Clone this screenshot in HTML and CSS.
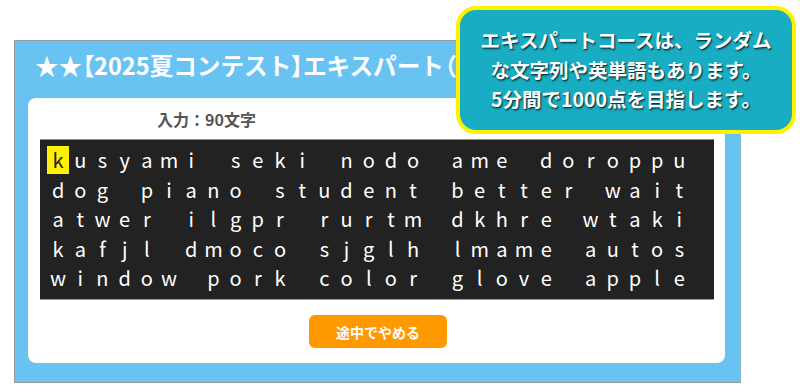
FILE: index.html
```html
<!DOCTYPE html>
<html lang="ja">
<head>
<meta charset="utf-8">
<link rel="stylesheet" href="styles.css">
</head>
<body>
<div class="page">
  <div class="panel">
    <h1 class="title">★★<span class="br">【</span>2025夏コンテスト<span class="br">】</span>エキスパート<span class="br">（</span></h1>
    <div class="card">
      <div class="label">入力：90文字</div>
      <div class="typebox">
        <div class="row"><span class="cur">k</span><span>u</span><span>s</span><span>y</span><span>a</span><span>m</span><span>i</span><span> </span><span>s</span><span>e</span><span>k</span><span>i</span><span> </span><span>n</span><span>o</span><span>d</span><span>o</span><span> </span><span>a</span><span>m</span><span>e</span><span> </span><span>d</span><span>o</span><span>r</span><span>o</span><span>p</span><span>p</span><span>u</span></div>
        <div class="row"><span>d</span><span>o</span><span>g</span><span> </span><span>p</span><span>i</span><span>a</span><span>n</span><span>o</span><span> </span><span>s</span><span>t</span><span>u</span><span>d</span><span>e</span><span>n</span><span>t</span><span> </span><span>b</span><span>e</span><span>t</span><span>t</span><span>e</span><span>r</span><span> </span><span>w</span><span>a</span><span>i</span><span>t</span></div>
        <div class="row"><span>a</span><span>t</span><span>w</span><span>e</span><span>r</span><span> </span><span>i</span><span>l</span><span>g</span><span>p</span><span>r</span><span> </span><span>r</span><span>u</span><span>r</span><span>t</span><span>m</span><span> </span><span>d</span><span>k</span><span>h</span><span>r</span><span>e</span><span> </span><span>w</span><span>t</span><span>a</span><span>k</span><span>i</span></div>
        <div class="row"><span>k</span><span>a</span><span>f</span><span>j</span><span>l</span><span> </span><span>d</span><span>m</span><span>o</span><span>c</span><span>o</span><span> </span><span>s</span><span>j</span><span>g</span><span>l</span><span>h</span><span> </span><span>l</span><span>m</span><span>a</span><span>m</span><span>e</span><span> </span><span>a</span><span>u</span><span>t</span><span>o</span><span>s</span></div>
        <div class="row"><span>w</span><span>i</span><span>n</span><span>d</span><span>o</span><span>w</span><span> </span><span>p</span><span>o</span><span>r</span><span>k</span><span> </span><span>c</span><span>o</span><span>l</span><span>o</span><span>r</span><span> </span><span>g</span><span>l</span><span>o</span><span>v</span><span>e</span><span> </span><span>a</span><span>p</span><span>p</span><span>l</span><span>e</span></div>
      </div>
      <div class="actions"><button class="stop">途中でやめる</button></div>
    </div>
  </div>
  <div class="callout">
    <p>エキスパートコースは、ランダム</p>
    <p>な文字列や英単語もあります。</p>
    <p>5分間で1000点を目指します。</p>
  </div>
</div>
</body>
</html>
```
FILE: styles.css
```css
* { box-sizing: border-box; }
html, body { margin: 0; padding: 0; background: #fff; }
body { font-family: "Noto Sans CJK JP", "Noto Sans", sans-serif; width: 800px; height: 392px; overflow: hidden; }
.page { position: relative; padding: 40px 0 0 14px; }
.panel {
  width: 727px; height: 343px;
  background: #69c3f2;
  border: 1px solid #9a9a9a;
  border-right-color: #8fb7cf;
  padding: 0 15px 0 13px;
  display: flex; flex-direction: column;
}
.title {
  margin: 0; height: 57px;
  font-size: 23.6px; font-weight: 700; color: #fff;
  line-height: 48px; padding-left: 7px;
  white-space: nowrap; overflow: hidden;
}
.title .br { font-feature-settings: "palt" 1; }
.card {
  background: #fff; border-radius: 8px;
  height: 265px;
  padding: 9px 11px 0 12px;
  display: flex; flex-direction: column;
}
.label {
  font-size: 16px; font-weight: 700; color: #555;
  padding-left: 117px; line-height: 24px; height: 32px;
}
.typebox {
  background: #222;
  border-top: 1px solid #8a8a8a;
  border-bottom: 1px solid #9a9a9a;
  height: 161px;
  padding: 5px 0 0 7px;
}
.row {
  display: flex;
  color: #fff; font-size: 20px; line-height: 29.5px;
  white-space: pre;
}
.row span { display: block; width: 22.2px; flex: none; text-align: center; }
.row .cur { background: #fff200; color: #222; height: 28px; line-height: 28px; margin-top: 1px; width: 22px; margin-right: 0.2px; }
.actions { display: flex; justify-content: center; padding-top: 15px; }
.stop {
  width: 138px; height: 33px;
  background: #ff9900; border: none; border-radius: 6px;
  color: #fff; font-family: inherit; font-size: 14px; font-weight: 700;
  padding: 0; margin-left: 2px;
}
.callout {
  position: absolute; left: 456px; top: 6px;
  width: 340px; height: 128px;
  background: #18adc3;
  border: 4px solid #fff200;
  border-radius: 20px;
  display: flex; flex-direction: column; justify-content: center; align-items: center;
  padding-bottom: 1px;
}
.callout p {
  margin: 0; color: #fff; font-size: 19.5px; font-weight: 700; line-height: 29.5px;
  text-shadow: 1px 1px 1px rgba(0,0,0,0.6), 1px 2px 2px rgba(0,0,0,0.3);
  white-space: nowrap;
}
```
